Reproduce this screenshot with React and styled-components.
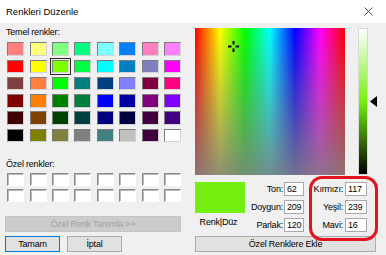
import React from 'react';
import styled, { createGlobalStyle } from 'styled-components';

const Global = createGlobalStyle`
  html, body { margin: 0; padding: 0; }
  body {
    width: 386px; height: 255px; overflow: hidden; background: #f0f0f0;
    font-family: "Liberation Sans", Arial, sans-serif; color: #000;
  }
`;

const Dialog = styled.div`
  position: relative;
  width: 386px;
  height: 255px;
  background: #f0f0f0;
  display: flex;
  flex-direction: column;
`;

const TitleBar = styled.div`
  height: 23px;
  flex: none;
  background: #fff;
  display: flex;
  align-items: center;
  justify-content: space-between;
  padding: 0 13px 0 6px;
  box-sizing: border-box;
  font-size: 9.5px;
`;

const Body = styled.div`
  display: flex;
  flex: 1;
`;

const LeftPane = styled.div`
  width: 195px;
  padding-left: 5px;
  box-sizing: border-box;
  display: flex;
  flex-direction: column;
`;

const SectionLabel = styled.div`
  font-size: 9px;
  letter-spacing: -0.2px;
  line-height: 11px;
  margin: ${p => p.$top}px 0 0 1px;
`;

const SwatchGrid = styled.div`
  display: grid;
  grid-template-columns: repeat(8, 17px);
  column-gap: 5.4px;
  row-gap: ${p => p.$gap}px;
  grid-auto-rows: ${p => p.$rowH}px;
  margin: ${p => p.$top}px 0 0 2.3px;
`;

const Swatch = styled.div`
  box-sizing: border-box;
  background: ${p => p.$c};
  border: 1px solid;
  border-color: #7c7c7c #d4d4d4 #d4d4d4 #7c7c7c;
  outline: ${p => (p.$sel ? '1px solid #2a2a2a' : 'none')};
  outline-offset: 1px;
`;

const CustomSwatch = styled.div`
  box-sizing: border-box;
  background: #fff;
  border: 1px solid;
  border-color: #8a8a8a #fff #fff #8a8a8a;
  box-shadow: inset 1px 1px 0 #b9b9b9;
`;

const Button = styled.div`
  box-sizing: border-box;
  height: ${p => p.$h || 16}px;
  width: ${p => p.$w}px;
  display: flex;
  align-items: center;
  justify-content: center;
  font-size: 9px;
  letter-spacing: -0.2px;
  background: ${p => (p.$disabled ? '#cccccc' : '#e1e1e1')};
  color: ${p => (p.$disabled ? '#a0a0a0' : '#000')};
  border: 1px solid ${p => (p.$primary ? '#0078d7' : p.$disabled ? '#c4c4c4' : '#adadad')};
  margin-top: ${p => p.$top || 0}px;
`;

const ButtonRow = styled.div`
  display: flex;
  gap: 7px;
  margin-top: 4px;
`;

const RightPane = styled.div`
  width: 191px;
  display: flex;
  flex-direction: column;
`;

const TopRow = styled.div`
  display: flex;
  margin-top: 5px;
  height: 147px;
`;

const Spectrum = styled.div`
  position: relative;
  width: 150px;
  height: 147px;
  background:
    linear-gradient(to bottom, rgba(128,128,128,0), rgba(128,128,128,0.88)),
    linear-gradient(to right, #f00 0%, #ff0 16.67%, #0f0 33.33%, #0ff 50%, #00f 66.67%, #f0f 83.33%, #f00 100%);
`;

const Crosshair = styled.svg`
  position: absolute;
  width: 11px;
  height: 11px;
`;

const LumBar = styled.div`
  width: 10px;
  height: 147px;
  margin-left: 13px;
  box-sizing: border-box;
  border: 1px solid #d8d8d8;
  background: linear-gradient(to bottom, #ffffff 0%, rgb(117,239,16) 50%, #000 100%);
`;

const ArrowTrack = styled.div`
  position: relative;
  width: 7px;
  margin-left: 2px;
`;

const Arrow = styled.svg`
  position: absolute;
  left: 0;
  width: 7px;
  height: 11px;
`;

const BottomRow = styled.div`
  display: flex;
  margin-top: 7px;
`;

const PreviewCol = styled.div`
  width: 50px;
  display: flex;
  flex-direction: column;
  align-items: center;
`;

const Preview = styled.div`
  width: 50px;
  height: 31px;
  background: ${p => p.$c};
`;

const PreviewLabel = styled.div`
  font-size: 9px;
  letter-spacing: -0.2px;
  line-height: 11px;
  margin-top: 3.5px;
  margin-right: 3px;
`;

const FieldGroup = styled.div`
  display: grid;
  grid-template-columns: ${p => p.$labelW}px ${p => p.$boxW}px;
  column-gap: ${p => p.$colGap}px;
  row-gap: 3.8px;
  grid-auto-rows: 14px;
  margin-left: ${p => p.$left}px;
`;

const FieldLabel = styled.div`
  font-size: 9px;
  letter-spacing: -0.2px;
  line-height: 14px;
  text-align: right;
  white-space: nowrap;
`;

const FieldBox = styled.div`
  box-sizing: border-box;
  background: #fff;
  border: 1px solid #a9a9a9;
  font-size: 9px;
  letter-spacing: -0.2px;
  line-height: 12px;
  padding-left: 2px;
  overflow: hidden;
`;

const Annotation = styled.div`
  position: absolute;
  left: 309px;
  top: 176px;
  width: 69px;
  height: 65px;
  box-sizing: border-box;
  border: 3px solid #e3141e;
  border-radius: 13px;
  pointer-events: none;
`;

const basic = [
  '#FF8080', '#FFFF80', '#80FF80', '#00FF80', '#80FFFF', '#0080FF', '#FF80C0', '#FF80FF',
  '#FF0000', '#FFFF00', '#80FF00', '#00FF40', '#00FFFF', '#0080C0', '#8080C0', '#FF00FF',
  '#804040', '#FF8040', '#00FF00', '#008080', '#004080', '#8080FF', '#800040', '#FF0080',
  '#800000', '#FF8000', '#008000', '#008040', '#0000FF', '#0000A0', '#800080', '#8000FF',
  '#400000', '#804000', '#004000', '#004040', '#000080', '#000040', '#400040', '#400080',
  '#000000', '#808000', '#808040', '#808080', '#408080', '#C0C0C0', '#400040', '#FFFFFF',
];

const hsl = { h: 62, s: 209, l: 120 };
const rgb = { r: 117, g: 239, b: 16 };

export default function App() {
  const crossX = (hsl.h / 239) * 150 - 5.5;
  const crossY = (1 - hsl.s / 240) * 147 - 5.5;
  const arrowY = (1 - hsl.l / 240) * 147 - 5.5;
  return (
    <Dialog>
      <Global />
      <TitleBar>
        <span>Renkleri Düzenle</span>
        <svg width="9" height="9" viewBox="0 0 9 9">
          <path d="M0.5 0.5 L8.5 8.5 M8.5 0.5 L0.5 8.5" stroke="#333" strokeWidth="0.9" />
        </svg>
      </TitleBar>
      <Body>
        <LeftPane>
          <SectionLabel $top={3.8}>Temel renkler:</SectionLabel>
          <SwatchGrid $top={4.5} $rowH={13.5} $gap={3.8}>
            {basic.map((c, i) => (
              <Swatch key={i} $c={c} $sel={i === 10} />
            ))}
          </SwatchGrid>
          <SectionLabel $top={16.5}>Özel renkler:</SectionLabel>
          <SwatchGrid $top={3.5} $rowH={13} $gap={3}>
            {Array.from({ length: 16 }).map((_, i) => (
              <CustomSwatch key={i} />
            ))}
          </SwatchGrid>
          <Button $w={176} $top={13.7} $disabled>Özel Renk Tanımla &gt;&gt;</Button>
          <ButtonRow>
            <Button $w={55} $h={16.5} $primary>Tamam</Button>
            <Button $w={55} $h={16.5}>İptal</Button>
          </ButtonRow>
        </LeftPane>
        <RightPane>
          <TopRow>
            <Spectrum>
              <Crosshair viewBox="0 0 11 11" style={{ left: crossX, top: crossY }}>
                <rect x="4.5" y="0" width="2" height="3.5" fill="#000" />
                <rect x="4.5" y="7.5" width="2" height="3.5" fill="#000" />
                <rect x="0" y="4.5" width="3.5" height="2" fill="#000" />
                <rect x="7.5" y="4.5" width="3.5" height="2" fill="#000" />
              </Crosshair>
            </Spectrum>
            <LumBar />
            <ArrowTrack>
              <Arrow viewBox="0 0 7 11" style={{ top: arrowY }}>
                <polygon points="7,0 7,11 0,5.5" fill="#000" />
              </Arrow>
            </ArrowTrack>
          </TopRow>
          <BottomRow>
            <PreviewCol>
              <Preview $c={`rgb(${rgb.r},${rgb.g},${rgb.b})`} />
              <PreviewLabel>Renk|Düz</PreviewLabel>
            </PreviewCol>
            <FieldGroup $labelW={37} $boxW={20} $colGap={1} $left={1}>
              <FieldLabel>Ton:</FieldLabel>
              <FieldBox>{hsl.h}</FieldBox>
              <FieldLabel>Doygun:</FieldLabel>
              <FieldBox>{hsl.s}</FieldBox>
              <FieldLabel>Parlak:</FieldLabel>
              <FieldBox>{hsl.l}</FieldBox>
            </FieldGroup>
            <FieldGroup $labelW={39} $boxW={22} $colGap={2} $left={0}>
              <FieldLabel>Kırmızı:</FieldLabel>
              <FieldBox>{rgb.r}</FieldBox>
              <FieldLabel>Yeşil:</FieldLabel>
              <FieldBox>{rgb.g}</FieldBox>
              <FieldLabel>Mavi:</FieldLabel>
              <FieldBox>{rgb.b}</FieldBox>
            </FieldGroup>
          </BottomRow>
          <Button $w={181} $h={16.5} $top={4.4}>Özel Renklere Ekle</Button>
        </RightPane>
      </Body>
      <Annotation />
    </Dialog>
  );
}
